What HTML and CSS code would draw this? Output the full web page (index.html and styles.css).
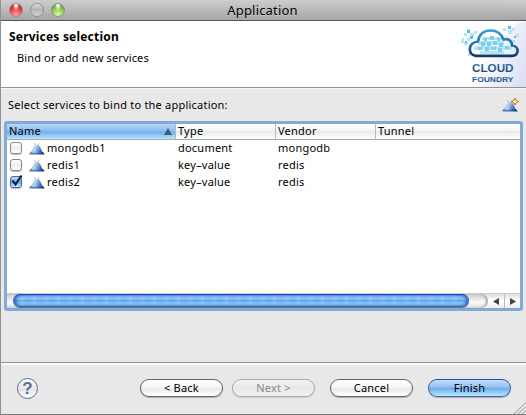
FILE: index.html
```html
<!DOCTYPE html>
<html lang="en">
<head>
<meta charset="utf-8">
<title>Application</title>
<link rel="stylesheet" href="styles.css">
</head>
<body>
<svg width="0" height="0" class="defs" aria-hidden="true">
  <defs>
    <linearGradient id="dome" x1="0" y1="0" x2="1" y2=".3"><stop offset="0" stop-color="#7fa9d0"/><stop offset=".4" stop-color="#b9d8f0"/><stop offset="1" stop-color="#3568b4"/></linearGradient>
    <linearGradient id="base" x1="0" x2="1"><stop offset="0" stop-color="#6c84bd"/><stop offset=".5" stop-color="#3c6cb8"/><stop offset="1" stop-color="#092979"/></linearGradient>
    <symbol id="service" viewBox="0 0 16 13">
      <path d="M0 12.500C.5 10.500 2 9.500 3.500 9.300H12C13.500 9.500 15 10.500 15.500 12.500Z" fill="url(#base)"/>
      <path d="M2.500 10.500C3.500 7 5 4 6.700 3.200H9.300C11 4 12.500 7 13.300 10.500Q8 12 2.500 10.500Z" fill="url(#dome)"/>
      <path d="M5.300 1.300 7.200 3.600M8.800 3.600 10 1.300" stroke="#6d96b4" stroke-width=".7" fill="none"/>
    </symbol>
  </defs>
</svg>
<div class="window">
  <header class="titlebar">
    <div class="lights"><i class="red"></i><i class="gray"></i><i class="green"></i></div>
    <h1>Application</h1>
  </header>
  <section class="banner">
    <div class="heading">
      <h2>Services selection</h2>
      <p>Bind or add new services</p>
    </div>
    <svg class="logo" width="96" height="66" viewBox="0 0 96 66">
      <defs>
        <linearGradient id="wash" x1="0" x2="1" y1=".3" y2=".7"><stop offset=".3" stop-color="#fff"/><stop offset="1" stop-color="#dce1f7"/></linearGradient>
        <linearGradient id="stroke" x1="0" y1="0" x2="0" y2="1"><stop offset="0" stop-color="#389bd3"/><stop offset=".55" stop-color="#286fa9"/><stop offset="1" stop-color="#173961"/></linearGradient>
        <linearGradient id="ink" x1="0" y1="0" x2="0" y2="1"><stop offset="0" stop-color="#3583b6"/><stop offset="1" stop-color="#193c68"/></linearGradient>
      </defs>
      <path d="M96 0v66H34C46 47 70 24 86 3Z" fill="url(#wash)"/>
      <g fill="#b5e5f5">
        <path d="M37 8h3v3h-3zM34 12h3v3h-3zM40 12h4v4h-4zM32 17h2v2h-2zM37 17h3v3h-3zM34 21h4v3h-4zM31 19h3v3h-3zM38 32h3v3h-3zM44 10h3v3h-3zM73 7h3v3h-3zM82 7h3v3h-3zM86 13h3v3h-3zM78 9h4v4h-4zM82 19h3v3h-3z"/>
        <path d="M52 16h20v3H52zM48 20h26v4H48zM44 25h38v4H44zM50 30h24v3H50z"/>
      </g>
      <path d="M54 17h3v3h-3zM60 15h4v4h-4zM67 17h3v3h-3zM51 21h4v4h-4zM57 21h4v4h-4zM63 20h4v4h-4zM69 22h4v4h-4zM48 26h4v3h-4zM55 26h4v4h-4zM61 26h5v3h-5zM68 27h4v4h-4zM75 25h4v3h-4z" fill="#79d0ee"/>
      <path d="M37 9h3v3h-3zM78 5h3v3h-3zM84 15h2v2h-2zM40 15h3v3h-3zM35 20h2v2h-2z" fill="#4bc2e9"/>
      <path d="M46 34.800C37.500 34 37.500 21.500 48 20.500C49 13.500 54 9.500 60.500 9.500C67 9.500 71.500 13 73.500 18.500C78 17 82 19.500 82 24.500C89.500 25 89.500 34.800 82 34.800Z" fill="none" stroke="url(#stroke)" stroke-width="2.700" stroke-linejoin="round"/>
      <text x="42" y="51" class="cloud" textLength="41.500" lengthAdjust="spacingAndGlyphs" fill="url(#ink)">CLOUD</text>
      <text x="42" y="60.800" class="foundry" textLength="41.500" lengthAdjust="spacingAndGlyphs" fill="url(#ink)">FOUNDRY</text>
    </svg>
  </section>
  <main>
    <div class="prompt">
      <span>Select services to bind to the application:</span>
      <svg class="add" width="18" height="15" viewBox="0 0 18 15"><use href="#service" y="2" width="16" height="13"/><path d="M13 1 14.200 3.300 16.500 4.500 14.200 5.700 13 8 11.800 5.700 9.500 4.500 11.800 3.300Z" fill="#fff4a5" stroke="#a98018"/></svg>
    </div>
    <div class="viewer">
      <div class="row head"><div class="sorted"><span>Name</span><svg width="8" height="7" viewBox="0 0 8 7"><path d="M4 0 8 7H0Z" fill="#405c7c"/></svg></div><div>Type</div><div>Vendor</div><div>Tunnel</div></div>
      <div class="row"><div class="name"><i class="check"></i><svg width="16" height="13"><use href="#service"/></svg><span>mongodb1</span></div><div>document</div><div>mongodb</div><div></div></div>
      <div class="row"><div class="name"><i class="check"></i><svg width="16" height="13"><use href="#service"/></svg><span>redis1</span></div><div>key–value</div><div>redis</div><div></div></div>
      <div class="row"><div class="name"><i class="check on"><svg width="13" height="14" viewBox="0 0 13 14"><path d="M2.500 6.500 5.500 10.500 11.500 1.500" fill="none" stroke="#0b1625" stroke-width="2"/></svg></i><svg width="16" height="13"><use href="#service"/></svg><span>redis2</span></div><div>key–value</div><div>redis</div><div></div></div>
      <div class="scroll">
        <div class="track"><div class="thumb"></div></div>
        <div class="arrow"><svg width="6" height="7" viewBox="0 0 6 7"><path d="M6 0v7L0 3.500Z" fill="#444"/></svg></div>
        <div class="arrow"><svg width="6" height="7" viewBox="0 0 6 7"><path d="M0 0v7L6 3.500Z" fill="#444"/></svg></div>
      </div>
    </div>
  </main>
  <footer>
    <div class="help">?</div>
    <div class="buttons">
      <button>&lt; Back</button><button class="next" disabled>Next &gt;</button><button class="cancel">Cancel</button><button class="primary">Finish</button>
    </div>
    <svg class="grip" width="12" height="12" viewBox="0 0 12 12"><path d="M.5 12 12 .5M4.500 12 12 4.500M8.500 12 12 8.500" stroke="#777"/><path d="M1.500 12 12 1.500M5.500 12 12 5.500M9.500 12 12 9.500" stroke="#fff" stroke-width=".7"/></svg>
  </footer>
</div>
</body>
</html>
```
FILE: styles.css
```css
* { box-sizing: border-box; }
body { margin: 0; font: 11px/17px "Noto Sans", "Open Sans", sans-serif; color: #000; overflow: hidden; }
h1, h2, p { margin: 0; }
.defs { position: absolute; }
.window { width: 526px; height: 415px; display: flex; flex-direction: column; background: #e8e8e8; border-left: 1px solid #929292; border-bottom: 1px solid #777; }
.titlebar { height: 21px; flex: none; display: grid; grid-template-columns: 70px 1fr 70px; background: linear-gradient(#cdcdcd, #a6a6a6); border-bottom: 1px solid #555; }
.titlebar h1 { font-size: 13px; font-weight: 400; line-height: 20px; text-align: center; letter-spacing: .18px; text-indent: -2px; text-shadow: 0 1px #ddd8; }
.lights { display: flex; gap: 7px; padding: 3px 0 0 8px; }
.lights i { width: 14px; height: 14px; border-radius: 50%; border: 1px solid #909090; }
.red { background: radial-gradient(ellipse at 50% 5%, #fff 0 10%, transparent 38%), radial-gradient(circle at 50% 90%, #ffa1a0, #e62930 65%, #b8222a); }
.gray { background: linear-gradient(#dcdcdc, #b4b4b4 45%, #d4d4d4); }
.green { background: radial-gradient(ellipse at 50% 5%, #fff 0 10%, transparent 38%), radial-gradient(circle at 50% 90%, #dcff9d, #78bd40 65%, #4b8e2c); }
.banner { height: 67px; flex: none; display: flex; justify-content: space-between; background: #fff; border-bottom: 1px solid #929292; }
.heading { padding: 7px 0 0 8px; }
.heading h2 { font-size: 12px; line-height: 17px; font-weight: 700; letter-spacing: .2px; }
.heading p { margin: 4px 0 0 8px; letter-spacing: .14px; }
.logo { flex: none; }
.cloud { font: 700 10.5px "Liberation Sans", sans-serif; }
.foundry { font: 700 7.6px "Liberation Sans", sans-serif; }
main { flex: 1; border-top: 1px solid #f7f7f7; letter-spacing: .22px; }
.prompt { height: 32px; display: flex; justify-content: space-between; padding: 7px 6px 0 7px; }
.add { margin-top: 1px; }
.viewer { height: 190px; margin: 0 2px 0 3px; width: 519px; display: flex; flex-direction: column; border: 3px solid #83a9d7; border-radius: 3px; background: #fff; }
.row { display: grid; grid-template-columns: 169px 100px 100px 1fr; height: 17px; line-height: 16px; flex: none; }
.row > div { padding-left: 2px; white-space: nowrap; }
.row.head { height: 16px; line-height: 14px; border-bottom: 1px solid #aaa; background: linear-gradient(#fff, #f5f5f5 45%, #e9e9e9 50%, #fff); }
.row.head > div { border-right: 1px solid #b9b9b9; }
.row.head > div:last-child { border-right: 0; }
.row.head .sorted { display: flex; justify-content: space-between; padding-right: 3px; background: linear-gradient(#b8d8f6, #88baf0 48%, #6eaeea 52%, #bae5ff); }
.sorted svg { margin-top: 4px; }
.row .name { display: flex; align-items: center; padding: 0 0 1px 3px; }
.name > svg { margin: 0 2px 0 7px; }
.check { width: 12px; height: 12px; border: 1px solid #888; border-radius: 3px; background: linear-gradient(#fff, #eee 50%, #fff); box-shadow: 0 1px 1px #bbb; }
.check.on { border-color: #4767a0; background: linear-gradient(#c7dff8, #6ca9ec 50%, #c7efff); }
.check.on svg { display: block; margin: -3px 0 0 -1px; overflow: visible; }
.scroll { height: 15px; margin-top: auto; display: flex; border-top: 1px solid #ccc; background: linear-gradient(#ddd, #fff 45%, #eee); }
.track { width: 482px; padding-left: 6px; border-radius: 0 8px 8px 0; background: linear-gradient(#ccc, #fafafa 60%, #ddd); box-shadow: inset -2px 0 2px #aaa; }
.thumb { width: 456px; height: 13px; border: 1px solid #3764ad; border-top-color: #1944cd; border-radius: 7px; background: repeating-linear-gradient(90deg, transparent 0 5px, #ffffff1c 8px 9px, transparent 12px), linear-gradient(#9bc6f5, #8abaf1 40%, #57a1ed 48%, #a7e9ff); box-shadow: inset 2px 0 3px #2367cd, inset -2px 0 3px #2367cd, 0 1px #777; }
.arrow { width: 16px; display: grid; place-items: center; }
.arrow + .arrow { border-left: 1px solid #bbb; }
footer { position: relative; height: 52px; flex: none; display: flex; justify-content: space-between; border-top: 1px solid #929292; box-shadow: inset 0 2px #f8f8f8; padding: 15px 15px 0 16px; }
.help { width: 21px; height: 21px; border: 1px solid #5a6c90; border-radius: 50%; background: linear-gradient(#fff, #e5e5e5 55%, #fff); color: #5a6c90; font: 700 17px/19px "Liberation Sans", sans-serif; text-align: center; }
.buttons { display: flex; padding-top: 1px; }
button { width: 83px; height: 18px; padding: 0; border: 1px solid #666; border-radius: 9px; font: inherit; line-height: 16px; letter-spacing: .22px; color: #000; background: linear-gradient(#fff, #f5f5f5 48%, #e9e9e9 52%, #fff); box-shadow: 0 1px 1px #aaa; }
.next { margin-left: 9px; border-color: #aaa; color: #888; background: linear-gradient(#f2f2f2, #e9e9e9 50%, #f1f1f1); box-shadow: 0 1px 1px #ccc; }
.cancel { margin-left: 15px; }
.primary { margin-left: 15px; border-color: #4966a8; border-top-color: #2944b5; background: linear-gradient(#c5def8, #94c0f0 45%, #70aceb 52%, #b5e8ff); }
.grip { position: absolute; right: 0; bottom: 0; }
```
